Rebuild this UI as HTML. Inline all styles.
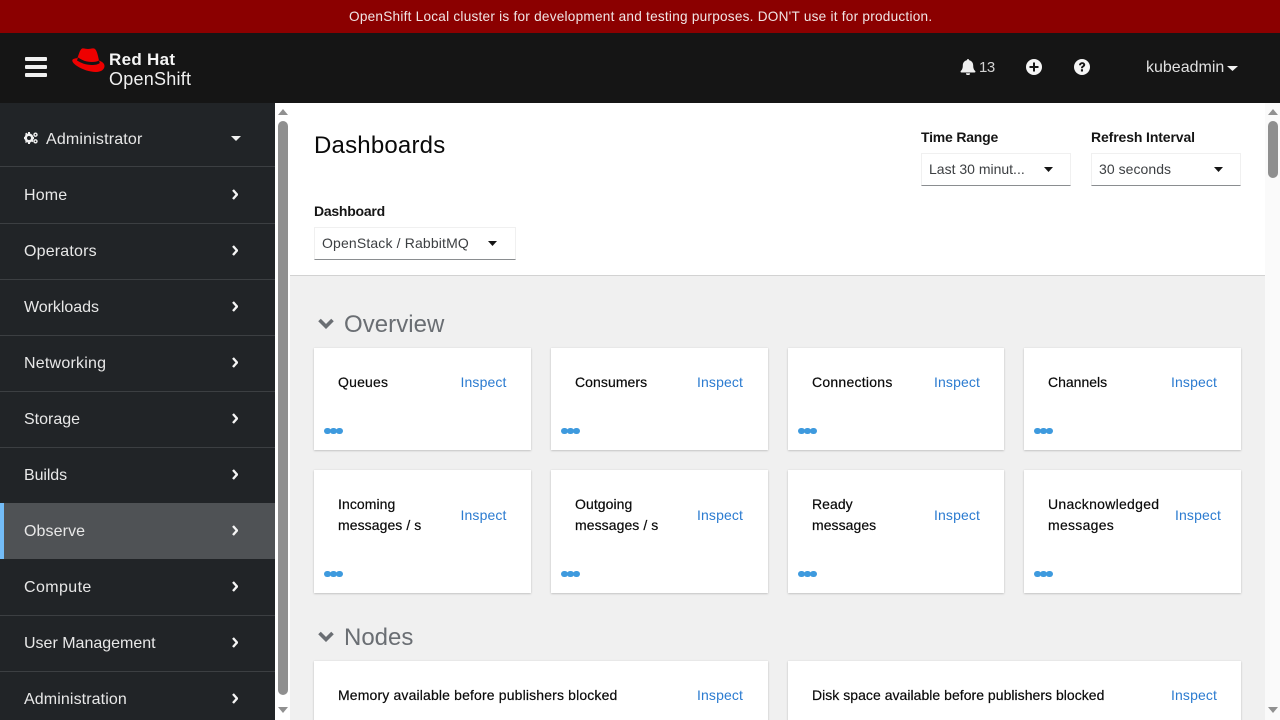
<!DOCTYPE html>
<html lang="en"><head><meta charset="utf-8"><title>Dashboards</title>
<style>
html,body{margin:0;padding:0;width:1280px;height:720px;overflow:hidden;background:#fff}
body{position:relative;font-family:"Liberation Sans",sans-serif;color:#151515}
.a,.t,svg.i{position:absolute}
.t{white-space:nowrap;line-height:20px;font-size:14px;letter-spacing:.13px}
.nav{color:#e8e8e8;font-size:16px;left:24px;line-height:24px}
.sep{position:absolute;left:0;width:275px;height:1px;background:#3c3f42}
.panel{position:absolute;background:#fff;box-shadow:0 1px 2px rgba(3,3,3,.16),0 0 2px rgba(3,3,3,.08)}
.ttl{color:#0a0a0a;-webkit-text-stroke:.2px #0a0a0a}
.ins{color:#2b7bd0}
.lab{font-weight:bold}
.sel{position:absolute;height:31px;background:#fff;border:1px solid #f0f0f0;border-bottom:1px solid #8a8d90;box-sizing:content-box}
.dots{position:absolute;width:18px;height:6px}
.dots i{position:absolute;top:0;width:6.500px;height:6.500px;border-radius:50%;background:#3e9ade}
.dots i:nth-child(1){left:0}.dots i:nth-child(2){left:6px}.dots i:nth-child(3){left:12px}
.sec{color:#6a6e73;font-size:24px;line-height:30px}
</style></head><body>

<div class="a" style="left:0;top:0;width:1280px;height:33px;background:#8b0000"></div>
<div class="t" style="left:349px;top:7px;color:#f0e4e4;font-size:13.6px;letter-spacing:.243px">OpenShift Local cluster is for development and testing purposes. DON'T use it for production.</div>

<div class="a" style="left:0;top:33px;width:1280px;height:70px;background:#151515"></div>
<div class="a" style="left:25px;top:57px;width:22px;height:4px;border-radius:1px;background:#f0f0f0"></div>
<div class="a" style="left:25px;top:65px;width:22px;height:4px;border-radius:1px;background:#f0f0f0"></div>
<div class="a" style="left:25px;top:73px;width:22px;height:4px;border-radius:1px;background:#f0f0f0"></div>

<svg class="i" style="left:72px;top:48px" width="33" height="25" viewBox="0 0 33 25">
<path d="M10 .5C12 0 14 1 16 1C18 1 20 0 22 .5C24 1 25 4 26 8L27 12.500C29.500 13.500 32.500 15 32.500 18C32.500 21.500 29 24 24 24C18 24 10 21.500 5 18C2 16 .3 14 .3 12.500C.3 11 2.500 10.500 5.500 10C6.500 7 8 1.500 10 .5Z" fill="#e00"/>
<path d="M6 9.500C10 12 14 14 20 14C23 14 25.500 13.500 27 12.500L27.800 15C26 16.500 23 17 20 17C14 17 9 15 5 12.500Z" fill="#151515"/>
</svg>
<div class="t" style="left:109px;top:50px;color:#f5f5f5;font-size:17px;font-weight:bold;letter-spacing:.3px">Red Hat</div>
<div class="t" style="left:109px;top:69px;color:#f0f0f0;font-size:18px;letter-spacing:.25px">OpenShift</div>

<svg class="i" style="left:960px;top:59px" width="16" height="16" viewBox="0 0 16 16"><path d="M8 0a1.300 1.300 0 0 0-1.200 1.200C4.200 1.800 2.800 3.800 2.800 6.500c0 3.300-1 4.500-2 5.500-.5.600-.2 1.500.7 1.500h13c.9 0 1.200-.9.700-1.500-1-1-2-2.200-2-5.500 0-2.700-1.400-4.700-4-5.300A1.300 1.300 0 0 0 8 0ZM6 14.300a2 2 0 0 0 4 0Z" fill="#f0f0f0"/></svg>
<div class="t" style="left:979px;top:58px;color:#d2d2d2;font-size:15px;letter-spacing:-.5px">13</div>
<svg class="i" style="left:1026px;top:59px" width="16" height="16" viewBox="0 0 16 16"><circle cx="8" cy="8" r="8" fill="#f5f5f5"/><path d="M7 3.500h2V7h3.500v2H9v3.500H7V9H3.500V7H7Z" fill="#151515"/></svg>
<svg class="i" style="left:1074px;top:59px" width="16" height="16" viewBox="0 0 16 16"><circle cx="8" cy="8" r="8" fill="#f5f5f5"/><path d="M5 6.200C5.100 4.300 6.400 3.200 8.200 3.200c1.700 0 3 1 3 2.600 0 1.200-.7 1.800-1.500 2.300-.6.400-.8.600-.8 1.200H7c0-1.200.3-1.800 1.200-2.400.6-.400 1-.6 1-1.100 0-.5-.4-.8-1-.8-.7 0-1.100.4-1.200 1.200ZM6.900 10.300h2.100v2.200H6.900Z" fill="#151515"/></svg>
<div class="t" style="left:1146px;top:58px;color:#e0e0e0;font-size:16px;letter-spacing:0">kubeadmin</div>
<svg class="i" style="left:1227px;top:66px" width="11" height="5" viewBox="0 0 11 5"><path d="M0 0h11L5.500 5Z" fill="#f0f0f0"/></svg>

<!-- sidebar -->
<div class="a" style="left:0;top:103px;width:275px;height:617px;background:#212427"></div>
<div class="a" style="left:0;top:503px;width:275px;height:56px;background:#4f5255"></div>
<div class="a" style="left:0;top:503px;width:4px;height:56px;background:#73bcf7"></div>
<div class="sep" style="top:166px"></div><div class="sep" style="top:223px"></div><div class="sep" style="top:279px"></div><div class="sep" style="top:335px"></div><div class="sep" style="top:391px"></div><div class="sep" style="top:447px"></div><div class="sep" style="top:615px"></div><div class="sep" style="top:671px"></div>

<svg class="i" style="left:24px;top:132px" width="14" height="12" viewBox="0 0 14 12"><circle cx="5" cy="6" r="3.300" fill="none" stroke="#f0f0f0" stroke-width="2.600"/><path d="M4 0h2v2H4ZM4 10h2v2H4ZM0 5h2v2H0ZM8 5h2v2H8ZM1 2l1.400-1.400 1 1-1.400 1.400ZM7.500 9l1-1 1 1-1 1.200ZM1 10l1-1 1 1-1 1Z" fill="#f0f0f0"/><circle cx="11.500" cy="2.700" r="1.500" fill="none" stroke="#f0f0f0" stroke-width="1.400"/><circle cx="11.500" cy="9.300" r="1.500" fill="none" stroke="#f0f0f0" stroke-width="1.400"/></svg>
<div class="t nav" style="top:128px;left:46px;letter-spacing:.17px">Administrator</div>
<svg class="i" style="left:231px;top:136px" width="10" height="5" viewBox="0 0 10 5"><path d="M0 0h10L5 5Z" fill="#f0f0f0"/></svg>

<div class="t nav" style="top:184px;letter-spacing:.15px">Home</div>
<div class="t nav" style="top:240px;letter-spacing:.18px">Operators</div>
<div class="t nav" style="top:296px;letter-spacing:-.04px">Workloads</div>
<div class="t nav" style="top:352px;letter-spacing:.22px">Networking</div>
<div class="t nav" style="top:408px;letter-spacing:0">Storage</div>
<div class="t nav" style="top:464px;letter-spacing:-.1px">Builds</div>
<div class="t nav" style="top:520px;letter-spacing:.1px">Observe</div>
<div class="t nav" style="top:576px;letter-spacing:.4px">Compute</div>
<div class="t nav" style="top:632px;letter-spacing:0">User Management</div>
<div class="t nav" style="top:688px;letter-spacing:.11px">Administration</div>

<svg class="i" style="left:232px;top:188.500px" width="6" height="11" viewBox="0 0 6 11"><path d="M1 1l4 4.500L1 10" fill="none" stroke="#f5f5f5" stroke-width="2.400"/></svg>
<svg class="i" style="left:232px;top:244.500px" width="6" height="11" viewBox="0 0 6 11"><path d="M1 1l4 4.500L1 10" fill="none" stroke="#f5f5f5" stroke-width="2.400"/></svg>
<svg class="i" style="left:232px;top:300.500px" width="6" height="11" viewBox="0 0 6 11"><path d="M1 1l4 4.500L1 10" fill="none" stroke="#f5f5f5" stroke-width="2.400"/></svg>
<svg class="i" style="left:232px;top:356.500px" width="6" height="11" viewBox="0 0 6 11"><path d="M1 1l4 4.500L1 10" fill="none" stroke="#f5f5f5" stroke-width="2.400"/></svg>
<svg class="i" style="left:232px;top:412.500px" width="6" height="11" viewBox="0 0 6 11"><path d="M1 1l4 4.500L1 10" fill="none" stroke="#f5f5f5" stroke-width="2.400"/></svg>
<svg class="i" style="left:232px;top:468.500px" width="6" height="11" viewBox="0 0 6 11"><path d="M1 1l4 4.500L1 10" fill="none" stroke="#f5f5f5" stroke-width="2.400"/></svg>
<svg class="i" style="left:232px;top:524.500px" width="6" height="11" viewBox="0 0 6 11"><path d="M1 1l4 4.500L1 10" fill="none" stroke="#f5f5f5" stroke-width="2.400"/></svg>
<svg class="i" style="left:232px;top:580.500px" width="6" height="11" viewBox="0 0 6 11"><path d="M1 1l4 4.500L1 10" fill="none" stroke="#f5f5f5" stroke-width="2.400"/></svg>
<svg class="i" style="left:232px;top:636.500px" width="6" height="11" viewBox="0 0 6 11"><path d="M1 1l4 4.500L1 10" fill="none" stroke="#f5f5f5" stroke-width="2.400"/></svg>
<svg class="i" style="left:232px;top:692.500px" width="6" height="11" viewBox="0 0 6 11"><path d="M1 1l4 4.500L1 10" fill="none" stroke="#f5f5f5" stroke-width="2.400"/></svg>

<!-- sidebar scrollbar -->
<div class="a" style="left:275px;top:103px;width:15px;height:617px;background:#fff"></div>
<svg class="i" style="left:278px;top:109px" width="10" height="6" viewBox="0 0 10 6"><path d="M5 0l5 6H0Z" fill="#909090"/></svg>
<div class="a" style="left:278px;top:121px;width:10px;height:574px;border-radius:5px;background:#8f8f8f"></div>
<svg class="i" style="left:278px;top:707px" width="10" height="6" viewBox="0 0 10 6"><path d="M0 0h10L5 6Z" fill="#909090"/></svg>

<!-- main -->
<div class="a" style="left:290px;top:276px;width:975px;height:444px;background:#f0f0f0"></div>
<div class="a" style="left:290px;top:275px;width:975px;height:1px;background:#d2d2d2"></div>

<div class="a" style="left:1265px;top:103px;width:15px;height:617px;background:#fafafa"></div>
<svg class="i" style="left:1268px;top:109px" width="10" height="6" viewBox="0 0 10 6"><path d="M5 0l5 6H0Z" fill="#909090"/></svg>
<div class="a" style="left:1268px;top:121px;width:10px;height:57px;border-radius:5px;background:#8f8f8f"></div>
<svg class="i" style="left:1268px;top:707px" width="10" height="6" viewBox="0 0 10 6"><path d="M0 0h10L5 6Z" fill="#909090"/></svg>

<div class="t" style="left:314px;top:131px;font-size:24px;line-height:30px;letter-spacing:.2px;color:#0a0a0a">Dashboards</div>

<div class="t lab" style="left:921px;top:127px;letter-spacing:-.2px">Time Range</div>
<div class="sel" style="left:921px;top:153px;width:148px"></div>
<div class="t" style="left:929px;top:159px;color:#3c3f42;letter-spacing:0">Last 30 minut...</div>
<svg class="i" style="left:1044px;top:167px" width="9" height="5" viewBox="0 0 9 5"><path d="M0 0h9L4.500 5Z" fill="#151515"/></svg>

<div class="t lab" style="left:1091px;top:127px;letter-spacing:-.12px">Refresh Interval</div>
<div class="sel" style="left:1091px;top:153px;width:148px"></div>
<div class="t" style="left:1099px;top:159px;color:#3c3f42;letter-spacing:.05px">30 seconds</div>
<svg class="i" style="left:1214px;top:167px" width="9" height="5" viewBox="0 0 9 5"><path d="M0 0h9L4.500 5Z" fill="#151515"/></svg>

<div class="t lab" style="left:314px;top:201px;letter-spacing:-.25px">Dashboard</div>
<div class="sel" style="left:314px;top:227px;width:200px"></div>
<div class="t" style="left:322px;top:233px;color:#3c3f42;letter-spacing:.15px">OpenStack / RabbitMQ</div>
<svg class="i" style="left:488px;top:241px" width="9" height="5" viewBox="0 0 9 5"><path d="M0 0h9L4.500 5Z" fill="#151515"/></svg>

<svg class="i" style="left:318px;top:318px" width="16" height="11" viewBox="0 0 16 11"><path d="M1.500 2l6.500 6.500L14.500 2" fill="none" stroke="#6a6e73" stroke-width="3.600"/></svg>
<div class="t sec" style="left:344px;top:310px;letter-spacing:.05px">Overview</div>

<div class="panel" style="left:314px;top:348px;width:217px;height:102px"></div>
<div class="panel" style="left:551px;top:348px;width:217px;height:102px"></div>
<div class="panel" style="left:788px;top:348px;width:216px;height:102px"></div>
<div class="panel" style="left:1024px;top:348px;width:217px;height:102px"></div>

<div class="t ttl" style="left:338px;top:372px;letter-spacing:.2px">Queues</div><div class="t ins" style="left:460.500px;top:372px">Inspect</div>
<div class="t ttl" style="left:575px;top:372px;letter-spacing:.07px">Consumers</div><div class="t ins" style="left:697px;top:372px">Inspect</div>
<div class="t ttl" style="left:812px;top:372px;letter-spacing:.25px">Connections</div><div class="t ins" style="left:934px;top:372px">Inspect</div>
<div class="t ttl" style="left:1048px;top:372px;letter-spacing:0">Channels</div><div class="t ins" style="left:1171px;top:372px">Inspect</div>
<div class="dots" style="left:324px;top:427.500px"><i></i><i></i><i></i></div>
<div class="dots" style="left:561px;top:427.500px"><i></i><i></i><i></i></div>
<div class="dots" style="left:798px;top:427.500px"><i></i><i></i><i></i></div>
<div class="dots" style="left:1034px;top:427.500px"><i></i><i></i><i></i></div>

<div class="panel" style="left:314px;top:470px;width:217px;height:123px"></div>
<div class="panel" style="left:551px;top:470px;width:217px;height:123px"></div>
<div class="panel" style="left:788px;top:470px;width:216px;height:123px"></div>
<div class="panel" style="left:1024px;top:470px;width:217px;height:123px"></div>

<div class="t ttl" style="left:338px;top:494px;line-height:21px;letter-spacing:.07px">Incoming<br>messages / s</div><div class="t ins" style="left:460.500px;top:505px">Inspect</div>
<div class="t ttl" style="left:575px;top:494px;line-height:21px;letter-spacing:.07px">Outgoing<br>messages / s</div><div class="t ins" style="left:697px;top:505px">Inspect</div>
<div class="t ttl" style="left:812px;top:494px;line-height:21px;letter-spacing:.05px">Ready<br>messages</div><div class="t ins" style="left:934px;top:505px">Inspect</div>
<div class="t ttl" style="left:1048px;top:494px;line-height:21px;letter-spacing:.28px">Unacknowledged<br>messages</div><div class="t ins" style="left:1175px;top:505px">Inspect</div>
<div class="dots" style="left:324px;top:570.500px"><i></i><i></i><i></i></div>
<div class="dots" style="left:561px;top:570.500px"><i></i><i></i><i></i></div>
<div class="dots" style="left:798px;top:570.500px"><i></i><i></i><i></i></div>
<div class="dots" style="left:1034px;top:570.500px"><i></i><i></i><i></i></div>

<svg class="i" style="left:318px;top:631px" width="16" height="11" viewBox="0 0 16 11"><path d="M1.500 2l6.500 6.500L14.500 2" fill="none" stroke="#6a6e73" stroke-width="3.600"/></svg>
<div class="t sec" style="left:344px;top:623px;letter-spacing:0">Nodes</div>

<div class="panel" style="left:314px;top:661px;width:454px;height:70px"></div>
<div class="panel" style="left:788px;top:661px;width:453px;height:70px"></div>
<div class="t ttl" style="left:338px;top:685px;letter-spacing:.15px">Memory available before publishers blocked</div><div class="t ins" style="left:697px;top:685px">Inspect</div>
<div class="t ttl" style="left:812px;top:685px;letter-spacing:.03px">Disk space available before publishers blocked</div><div class="t ins" style="left:1171px;top:685px">Inspect</div>

</body></html>
